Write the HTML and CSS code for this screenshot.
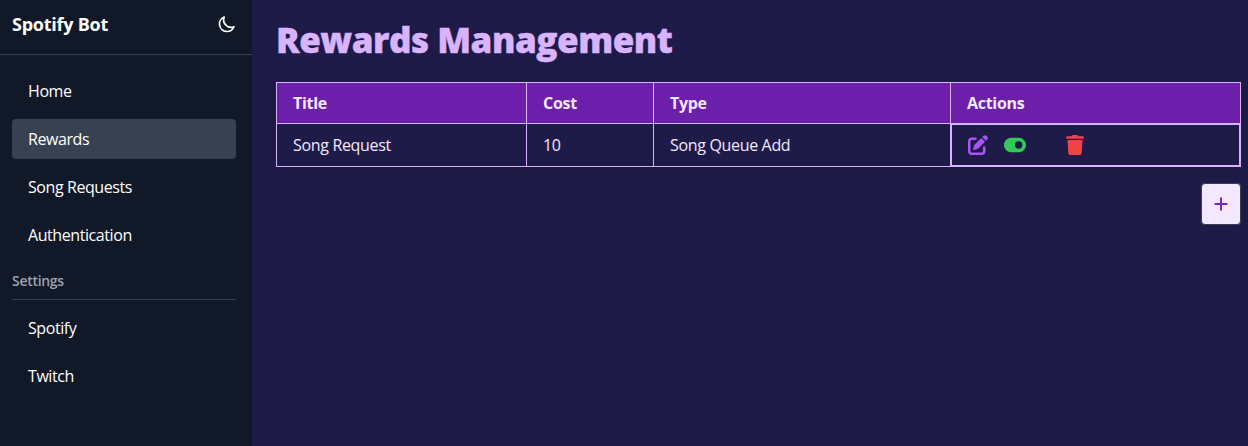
FILE: index.html
```html
<!DOCTYPE html>
<html lang="en">
<head>
<meta charset="utf-8">
<title>Spotify Bot</title>
<link rel="stylesheet" href="styles.css">
</head>
<body>
<div class="app">
  <aside class="sidebar">
    <header class="brand">
      <span class="brand-name">Spotify Bot</span>
      <svg class="moon" viewBox="0 0 24 24" fill="none" stroke="currentColor" stroke-width="2" stroke-linecap="round" stroke-linejoin="round"><path d="M20.354 15.354A9 9 0 018.646 3.646 9.003 9.003 0 0012 21a9.003 9.003 0 008.354-5.646z"/></svg>
    </header>
    <nav class="menu">
      <a class="item">Home</a>
      <a class="item active">Rewards</a>
      <a class="item">Song Requests</a>
      <a class="item">Authentication</a>
    </nav>
    <h2 class="section">Settings</h2>
    <nav class="menu settings">
      <a class="item">Spotify</a>
      <a class="item">Twitch</a>
    </nav>
  </aside>
  <main class="content">
    <h1 class="title">Rewards Management</h1>
    <table class="rewards">
      <colgroup><col class="c-title"><col class="c-cost"><col class="c-type"><col class="c-actions"></colgroup>
      <thead><tr><th>Title</th><th>Cost</th><th>Type</th><th>Actions</th></tr></thead>
      <tbody><tr>
        <td>Song Request</td><td>10</td><td>Song Queue Add</td>
        <td class="actions-cell"><div class="actions">
          <svg class="edit" viewBox="0 0 512 512" fill="currentColor"><path d="M471.600 21.700c-21.900-21.900-57.300-21.900-79.200 0L362.300 51.700l97.900 97.900 30.100-30.100c21.900-21.900 21.900-57.300 0-79.200L471.600 21.700zm-299.200 220c-6.100 6.100-10.800 13.600-13.500 21.900l-29.600 88.800c-2.900 8.600-.6 18.100 5.800 24.600s15.900 8.700 24.600 5.800l88.800-29.600c8.200-2.700 15.700-7.400 21.900-13.500L437.700 172.300 339.700 74.300 172.400 241.700zM96 64C43 64 0 107 0 160V416c0 53 43 96 96 96H352c53 0 96-43 96-96V320c0-17.700-14.300-32-32-32s-32 14.300-32 32v96c0 17.700-14.300 32-32 32H96c-17.700 0-32-14.300-32-32V160c0-17.700 14.300-32 32-32h96c17.700 0 32-14.300 32-32s-14.300-32-32-32H96z"/></svg>
          <svg class="toggle" viewBox="0 0 576 512" fill="currentColor"><path d="M384 64H192C86 64 0 150 0 256s86 192 192 192h192c106 0 192-86 192-192S490 64 384 64zm0 288a96 96 0 1 1 0-192 96 96 0 1 1 0 192z"/></svg>
          <svg class="trash" viewBox="0 0 448 512" fill="currentColor"><path d="M432 32H312l-9.400-18.700A24 24 0 0 0 281.100 0H166.800a23.720 23.720 0 0 0-21.400 13.300L136 32H16A16 16 0 0 0 0 48v32a16 16 0 0 0 16 16h416a16 16 0 0 0 16-16V48a16 16 0 0 0-16-16zM53.200 467a48 48 0 0 0 47.900 45h245.800a48 48 0 0 0 47.900-45L416 128H32z"/></svg>
        </div></td>
      </tr></tbody>
    </table>
    <button class="add" aria-label="Add reward"><svg viewBox="0 0 14 14" fill="none" stroke="currentColor" stroke-width="2"><path d="M7 .5v13M.5 7h13"/></svg></button>
  </main>
</div>
</body>
</html>
```
FILE: styles.css
```css
* { box-sizing: border-box; }
body {
  margin: 0;
  background: #1f1b48;
  color: #fff;
  font: 16px/24px "Open Sans", "Noto Sans", sans-serif;
}
.app { display: flex; width: 1248px; height: 446px; overflow: hidden; }
.sidebar { width: 252px; flex: none; background: #111827; }
.brand {
  height: 55px;
  padding: 0 15px 7px 12px;
  border-bottom: 1px solid #374151;
  display: flex;
  align-items: center;
  justify-content: space-between;
}
.brand-name { padding-top: 1px; font-size: 18px; font-weight: 700; letter-spacing: -0.25px; }
.moon { width: 20px; height: 20px; }
.menu { padding: 16px 16px 0 12px; display: flex; flex-direction: column; gap: 8px; }
.item {
  height: 40px;
  padding: 0 16px;
  border-radius: 4px;
  display: flex;
  align-items: center;
  letter-spacing: -0.42px;
}
.active { background: #374151; }
.section {
  margin: 16px 16px 0 12px;
  height: 29px;
  border-bottom: 1px solid #374151;
  color: #9ca3af;
  font-size: 14px;
  font-weight: 600;
  line-height: 20px;
  letter-spacing: -0.3px;
}
.settings { padding-top: 8px; }
.content {
  flex: 1;
  padding: 20px 7px 0 24px;
  display: flex;
  flex-direction: column;
}
.title {
  margin: 0 0 22px;
  color: #d8b4fe;
  font-size: 35px;
  font-weight: 800;
  line-height: 40px;
  letter-spacing: -0.48px;
  -webkit-text-stroke: 0.4px #d8b4fe;
}
.rewards {
  width: 965px;
  table-layout: fixed;
  border-collapse: separate;
  border-spacing: 0;
  border: solid #d8b4fe;
  border-width: 1px 0 0 1px;
  color: #f3e8ff;
  box-shadow: 0 4px 8px rgba(0, 0, 0, .1);
}
.c-title { width: 250px; }
.c-cost { width: 127px; }
.c-type { width: 297px; }
.c-actions { width: 290px; }
.rewards th, .rewards td {
  padding: 0 16px;
  text-align: left;
  border: solid #d8b4fe;
  border-width: 0 1px 1px 0;
}
.rewards th { height: 41px; background: #6b1fab; font-weight: 700; letter-spacing: -0.3px; }
.rewards td { height: 43px; letter-spacing: -0.33px; }
.rewards .actions-cell { box-shadow: inset 1px 1px #d8b4fe, inset -1px -1px #d8b4fe; }
.actions { display: flex; align-items: center; }
.edit { width: 20px; height: 20px; margin-left: 1px; color: #a855f7; }
.toggle { width: 22px; height: 20px; margin-left: 16px; color: #34c759; }
.trash { width: 18px; height: 20px; margin-left: 40px; color: #ef4444; }
.add {
  align-self: flex-end;
  width: 40px;
  height: 42px;
  margin-top: 16px;
  padding: 0;
  border: 1px solid #374151;
  border-radius: 4px;
  background: #f3e8ff;
  color: #7e22ce;
  display: grid;
  place-items: center;
}
.add svg { width: 14px; height: 14px; }
```
